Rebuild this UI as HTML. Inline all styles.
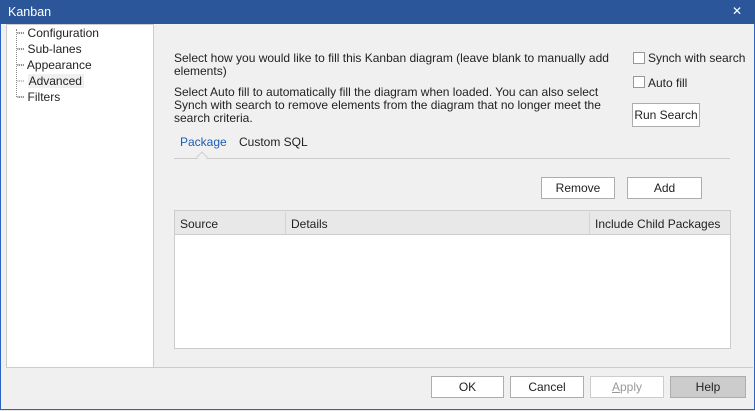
<!DOCTYPE html><html><head><style>
*{margin:0;padding:0;box-sizing:border-box}
body{width:755px;height:411px;background:#e6e6ea;position:relative;overflow:hidden;font-family:"Liberation Sans","DejaVu Sans",sans-serif;font-size:12px;color:#222}
.a{position:absolute}
.win{left:0;top:0;width:755px;height:410px;background:#f0f0f0;border:1px solid #2a64c5;border-top:none}
.title{left:0;top:0;width:755px;height:24px;background:#2b579a;color:#fff;font-size:12.5px;padding:5px 0 0 8px}
.btn{border:1px solid #adadad;background:#fff;text-align:center;line-height:20px;height:22px}
.cb{width:12px;height:12px;border:1px solid #999;background:#fff}
</style></head><body>
<div class="a win"></div>
<div class="a title">Kanban</div>
<div class="a" style="right:13px;top:4px;color:#fff;font-size:12px">✕</div>
<div class="a" style="left:6px;top:24px;width:148px;height:344px;background:#fff;border:1px solid #ccc"></div>
<div class="a" style="left:6px;top:367px;width:747px;height:1px;background:#ccc"></div>
<div class="a" style="left:16px;top:29px;width:1px;height:68px;border-left:1px dotted #888"></div>
<div class="a" style="left:17px;top:25px;line-height:16px">
<div>┈ Configuration</div><div>┈ Sub-lanes</div><div>┈ Appearance</div><div><span style="color:#888">┈</span> <span style="background:#f0f0f0;padding:0 2px 0 1px">Advanced</span></div><div>┈ Filters</div></div>
<div class="a" style="left:174px;top:52px;width:460px;line-height:13px">Select how you would like to fill this Kanban diagram (leave blank to manually add elements)</div>
<div class="a" style="left:174px;top:86px;width:440px;line-height:13px">Select Auto fill to automatically fill the diagram when loaded. You can also select Synch with search to remove elements from the diagram that no longer meet the search criteria.</div>
<div class="a cb" style="left:633px;top:52px"></div><div class="a" style="left:648px;top:51px">Synch with search</div>
<div class="a cb" style="left:633px;top:76px"></div><div class="a" style="left:648px;top:76px">Auto fill</div>
<div class="a btn" style="left:632px;top:103px;width:68px;height:24px;line-height:22px">Run Search</div>
<div class="a" style="left:180px;top:135px;color:#1a5fb4">Package</div>
<div class="a" style="left:239px;top:135px">Custom SQL</div>
<div class="a" style="left:174px;top:158px;width:556px;height:1px;background:#ccc"></div>
<div class="a" style="left:198px;top:153px;width:8px;height:8px;background:#f0f0f0;border-left:1px solid #ccc;border-top:1px solid #ccc;transform:rotate(45deg)"></div>
<div class="a btn" style="left:541px;top:177px;width:74px">Remove</div>
<div class="a btn" style="left:627px;top:177px;width:75px">Add</div>
<div class="a" style="left:174px;top:210px;width:557px;height:139px;background:#fff;border:1px solid #ccc"></div>
<div class="a" style="left:175px;top:211px;width:555px;height:24px;background:#e8e8e8;border-bottom:1px solid #ccc"></div>
<div class="a" style="left:285px;top:212px;width:1px;height:22px;background:#d4d4d4"></div>
<div class="a" style="left:589px;top:212px;width:1px;height:22px;background:#d4d4d4"></div>
<div class="a" style="left:180px;top:217px">Source</div>
<div class="a" style="left:291px;top:217px">Details</div>
<div class="a" style="left:595px;top:217px">Include Child Packages</div>
<div class="a btn" style="left:431px;top:376px;width:73px">OK</div>
<div class="a btn" style="left:510px;top:376px;width:74px">Cancel</div>
<div class="a btn" style="left:590px;top:376px;width:74px;color:#999;border-color:#ccc"><u>A</u>pply</div>
<div class="a btn" style="left:670px;top:376px;width:76px;background:#ccc">Help</div>
</body></html>
